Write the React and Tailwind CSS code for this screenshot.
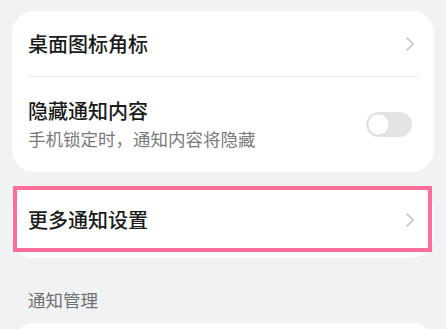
import React from 'react';

const font = { fontFamily: '"Noto Sans CJK SC", "Noto Sans", sans-serif' };

const Chevron = () => (
    <svg width="10" height="16" viewBox="0 0 10 16" fill="none">
        <polyline points="2,2 8,8 2,14" stroke="#c2c2c2" strokeWidth="1.5" strokeLinecap="round" strokeLinejoin="round" />
    </svg>
);

const Toggle = () => (
    <div className="w-[46px] h-[25px] rounded-full bg-[#e4e4e4] flex items-center px-[2px]">
        <div className="w-[21px] h-[21px] rounded-full bg-white shadow-[0_0_1px_rgba(0,0,0,0.25)]" />
    </div>
);

export default function App() {
    return (
        <div className="w-[446px] h-[329px] overflow-hidden bg-[#f1f2f4] px-3 pt-[11px] flex flex-col" style={font}>
            {/* card 1 */}
            <div className="shrink-0 bg-white rounded-[22px] flex flex-col">
                <div className="h-[65px] pl-4 pr-[19px] flex items-center justify-between">
                    <span className="text-[20px] font-medium text-[#1b1b1b]">桌面图标角标</span>
                    <Chevron />
                </div>
                <div className="ml-4 mr-[15px] h-px bg-[#ececec]" />
                <div className="h-[95px] pl-4 pr-[22px] flex items-center justify-between">
                    <div className="flex flex-col">
                        <span className="text-[20px] leading-[26px] font-medium text-[#1b1b1b]">隐藏通知内容</span>
                        <span className="text-[17.5px] leading-[24px] mt-[3px] text-[#7a7a7a]">手机锁定时，通知内容将隐藏</span>
                    </div>
                    <Toggle />
                </div>
            </div>

            {/* card 2 with highlight */}
            <div className="shrink-0 relative mt-[15px] bg-white rounded-[22px] h-[71px]">
                <div className="h-[65px] pl-4 pr-[19px] flex items-center justify-between">
                    <span className="text-[20px] font-medium text-[#1b1b1b]">更多通知设置</span>
                    <Chevron />
                </div>
                <div className="absolute left-[1px] right-[2px] top-[-1px] h-[66px] border-4 border-[#fa6f97]" />
            </div>

            <div className="shrink-0 h-[65px] pl-4 flex items-end pb-[10px]">
                <span className="text-[17.5px] text-[#707070]">通知管理</span>
            </div>

            <div className="shrink-0 bg-white rounded-[22px] h-[60px]" />
        </div>
    );
}
